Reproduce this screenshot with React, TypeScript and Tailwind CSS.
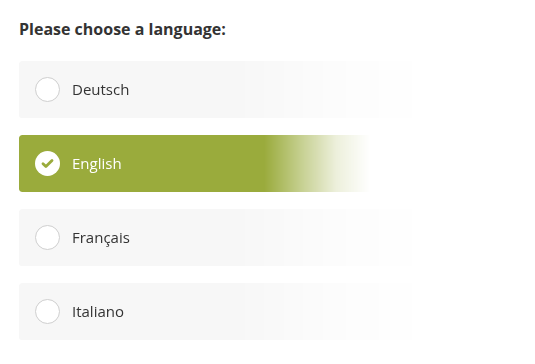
import React from "react";

const languages = [
  { id: "de", label: "Deutsch" },
  { id: "en", label: "English" },
  { id: "fr", label: "Français" },
  { id: "it", label: "Italiano" },
];

export default function App() {
  const selected = "en";

  return (
    <div className="min-h-screen bg-white pl-[19px] pr-[35px] pt-[18px] font-['Open_Sans',sans-serif]">
      <h2 className="text-[16px] font-bold leading-[22px] text-[#333]">Please choose a language:</h2>

      <ul className="mt-[21px] flex flex-col gap-[17px]">
        {languages.map((lang) => {
          const active = lang.id === selected;
          return (
            <li
              key={lang.id}
              className={`flex h-[57px] items-center rounded-[3px] pl-[16px] shadow-[0_2px_2px_rgba(0,0,0,0.07)] ${
                active
                  ? "bg-[#9aab3c] [mask-image:linear-gradient(to_right,black_51%,rgba(0,0,0,0.55)_59%,rgba(0,0,0,0.18)_66%,transparent_73%)]"
                  : "bg-[#f7f7f7] [mask-image:linear-gradient(to_right,black_45%,rgba(0,0,0,0.35)_66%,transparent_85%)]"
              }`}
            >
              {active ? (
                <span className="flex h-[25px] w-[25px] items-center justify-center rounded-full bg-white">
                  <svg viewBox="0 0 16 16" className="h-[15px] w-[15px]">
                    <path
                      d="M3.2 8.3l3.1 3L12.8 4.8"
                      fill="none"
                      stroke="#9aab3c"
                      strokeWidth="3"
                      strokeLinecap="round"
                      strokeLinejoin="round"
                    />
                  </svg>
                </span>
              ) : (
                <span className="h-[25px] w-[25px] rounded-full border border-[#cfcfcf] bg-white" />
              )}
              <span
                className={`ml-[12px] text-[15px] leading-none ${active ? "text-white" : "text-[#333]"}`}
              >
                {lang.label}
              </span>
            </li>
          );
        })}
      </ul>
    </div>
  );
}
